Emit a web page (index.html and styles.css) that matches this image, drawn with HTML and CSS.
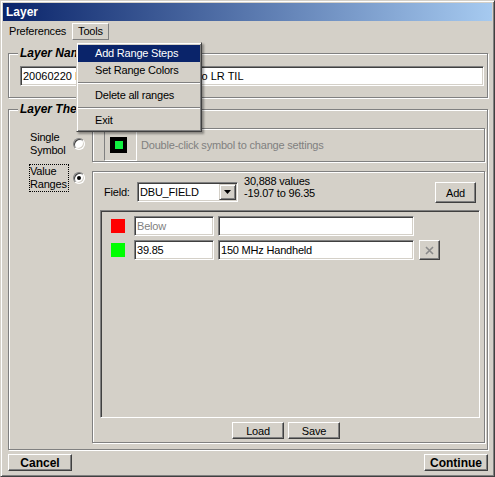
FILE: index.html
```html
<!DOCTYPE html>
<html>
<head>
<meta charset="utf-8">
<title>Layer</title>
<link rel="stylesheet" href="styles.css">
</head>
<body>
<div class="window">
  <div class="titlebar">Layer</div>
  <div class="menubar">
    <span class="menu-item">Preferences</span>
    <span class="menu-item open">Tools</span>
  </div>
  <div class="content">
    <div class="group name-group">
      <div class="group-title">Layer Name</div>
      <div class="field layer-name">20060220 DBU 150 MHz Handheld to LR TIL</div>
    </div>
    <div class="group theme-group">
      <div class="group-title">Layer Theme</div>
      <div class="theme-body">
        <div class="options">
          <div class="option opt-single">
            <span class="opt-label">Single<br>Symbol</span>
            <span class="radio"></span>
          </div>
          <div class="option opt-ranges">
            <span class="opt-label focus">Value<br>Ranges</span>
            <span class="radio checked"></span>
          </div>
        </div>
        <div class="panels">
          <div class="panel single-panel">
            <div class="symbol"><div class="symbol-black"><div class="symbol-fill"></div></div></div>
            <span class="hint">Double-click symbol to change settings</span>
          </div>
          <div class="panel ranges-panel">
            <div class="field-row">
              <span class="field-label">Field:</span>
              <div class="combo">
                <span class="combo-text">DBU_FIELD</span>
                <span class="combo-btn"><svg width="7" height="4" viewBox="0 0 7 4"><polygon points="0,0 7,0 3.5,4" fill="#000"/></svg></span>
              </div>
              <div class="stats">
                <div>30,888 values</div>
                <div>-19.07 to 96.35</div>
              </div>
              <button class="btn add-btn">Add</button>
            </div>
            <div class="range-list">
              <div class="range-row">
                <span class="swatch red"></span>
                <div class="field min disabled">Below</div>
                <div class="field lbl"></div>
              </div>
              <div class="range-row">
                <span class="swatch green"></span>
                <div class="field min">39.85</div>
                <div class="field lbl">150 MHz Handheld</div>
                <button class="btn x-btn"><svg width="9" height="9" viewBox="0 0 9 9"><path d="M1 1 L8 8 M8 1 L1 8" stroke="#8a8a8a" stroke-width="1.6" fill="none"/></svg></button>
              </div>
            </div>
            <div class="io-row">
              <button class="btn io-btn">Load</button>
              <button class="btn io-btn">Save</button>
            </div>
          </div>
        </div>
      </div>
    </div>
    <div class="bottom-bar">
      <button class="btn main-btn">Cancel</button>
      <button class="btn main-btn">Continue</button>
    </div>
  </div>
  <div class="dropdown">
    <div class="dd-item active">Add Range Steps</div>
    <div class="dd-item">Set Range Colors</div>
    <div class="dd-sep"></div>
    <div class="dd-item">Delete all ranges</div>
    <div class="dd-sep"></div>
    <div class="dd-item">Exit</div>
  </div>
</div>
</body>
</html>
```
FILE: styles.css
```css
* { box-sizing: border-box; }
html, body { margin: 0; padding: 0; }
body {
  font-family: "Liberation Sans", Arial, sans-serif;
  font-size: 11px;
  letter-spacing: -0.2px;
  color: #000;
  background: #d4d0c8;
}
.window {
  position: relative;
  width: 495px;
  height: 477px;
  display: flex;
  flex-direction: column;
  background: #d4d0c8;
  border: 1px solid;
  border-color: #d4d0c8 #404040 #404040 #d4d0c8;
  box-shadow: inset 1px 1px 0 #fff, inset -1px -1px 0 #808080;
  padding: 2px;
}
.titlebar {
  height: 18px;
  line-height: 18px;
  padding-left: 3px;
  background: linear-gradient(90deg, #0a246a, #a6caf0);
  color: #fff;
  font-weight: bold;
  font-size: 12px;
  letter-spacing: 0;
}
.menubar {
  height: 19px;
  display: flex;
  padding-top: 2px;
}
.menu-item {
  height: 17px;
  line-height: 15px;
  padding: 0 5px;
  border: 1px solid transparent;
}
.menu-item.open {
  border-color: #fff #808080 #808080 #fff;
}
.content {
  flex: 1;
  display: flex;
  flex-direction: column;
  padding: 0 4px 0 5px;
}
.group {
  border: 1px solid #808080;
  box-shadow: inset 1px 1px 0 #fff, 1px 1px 0 #fff;
}
.group-title {
  font-size: 12px;
  font-weight: bold;
  font-style: italic;
  letter-spacing: 0;
  line-height: 14px;
  height: 14px;
  margin-top: -8px;
  background: #d4d0c8;
  width: max-content;
  padding: 0 2px;
}
.name-group {
  margin-top: 13px;
  padding: 0 3px 11px 11px;
}
.name-group .group-title {
  margin-left: -2px;
  margin-bottom: 6px;
}
.field {
  background: #fff;
  height: 20px;
  border: 1px solid;
  border-color: #808080 #fff #fff #808080;
  box-shadow: inset 1px 1px 0 #404040, inset -1px -1px 0 #d4d0c8;
  padding: 0 2px;
  line-height: 18px;
  white-space: nowrap;
  overflow: hidden;
}
.layer-name { letter-spacing: 0; }
.field.disabled { color: #808080; }
.theme-group {
  margin-top: 11px;
  flex: 1;
  display: flex;
  flex-direction: column;
  padding: 0 2px 6px 20px;
}
.theme-group .group-title {
  margin-left: -11px;
  margin-bottom: 12px;
}
.theme-body {
  flex: 1;
  display: flex;
}
.options {
  width: 56px;
  margin-right: 7px;
}
.option {
  display: flex;
  align-items: center;
  gap: 4px;
}
.opt-single { margin-top: 2px; }
.opt-ranges { margin-top: 6px; }
.opt-label {
  width: 40px;
  line-height: 13px;
  border: 1px dotted transparent;
}
.opt-label.focus { border-color: #000; }
.radio {
  position: relative;
  width: 12px;
  height: 12px;
  border-radius: 50%;
  background: #fff;
  border: 1px solid;
  border-color: #808080 #fff #fff #808080;
  box-shadow: inset 1px 1px 0 #404040, inset -1px -1px 0 #d4d0c8;
  display: flex;
  align-items: center;
  justify-content: center;
}
.radio.checked::after {
  content: "";
  width: 4px;
  height: 4px;
  border-radius: 50%;
  background: #000;
}
.panels {
  flex: 1;
  display: flex;
  flex-direction: column;
  gap: 9px;
}
.panel {
  border: 1px solid #808080;
  box-shadow: inset 1px 1px 0 #fff, 1px 1px 0 #fff;
}
.single-panel {
  height: 34px;
  display: flex;
  align-items: center;
  padding-left: 11px;
}
.symbol {
  width: 33px;
  height: 31px;
  border: 1px solid;
  border-color: #808080 #fff #fff #808080;
  display: flex;
  align-items: center;
  padding-left: 5px;
}
.symbol-black {
  width: 17px;
  height: 16px;
  background: #000;
  display: flex;
  align-items: center;
  justify-content: center;
}
.symbol-fill {
  width: 8px;
  height: 8px;
  background: #10f040;
}
.hint {
  color: #808080;
  margin-left: 4px;
}
.ranges-panel {
  flex: 1;
  display: flex;
  flex-direction: column;
  padding: 10px 4px 3px 7px;
}
.field-row {
  display: flex;
  align-items: flex-start;
  height: 21px;
}
.field-label {
  margin-left: 4px;
  width: 33px;
  line-height: 20px;
}
.combo {
  width: 101px;
  height: 20px;
  display: flex;
  background: #fff;
  border: 1px solid;
  border-color: #808080 #fff #fff #808080;
  box-shadow: inset 1px 1px 0 #404040, inset -1px -1px 0 #d4d0c8;
}
.combo-text {
  flex: 1;
  padding-left: 2px;
  line-height: 18px;
}
.combo-btn {
  width: 17px;
  height: 16px;
  margin: 1px 1px 1px 0;
  background: #d4d0c8;
  border: 1px solid;
  border-color: #d4d0c8 #404040 #404040 #d4d0c8;
  box-shadow: inset 1px 1px 0 #fff, inset -1px -1px 0 #808080;
  display: flex;
  align-items: center;
  justify-content: center;
}
.stats {
  margin-left: 6px;
  margin-top: -7px;
  line-height: 12px;
}
.btn {
  font-family: inherit;
  font-size: 11px;
  letter-spacing: inherit;
  color: #000;
  background: #d4d0c8;
  border: 1px solid;
  border-color: #fff #404040 #404040 #fff;
  box-shadow: inset -1px -1px 0 #808080;
  padding: 0;
  margin: 0;
  display: flex;
  align-items: center;
  justify-content: center;
}
.add-btn {
  margin-left: auto;
  margin-right: 4px;
  width: 41px;
  height: 21px;
}
.range-list {
  flex: 1;
  margin-top: 7px;
  border: 1px solid;
  border-color: #808080 #fff #fff #808080;
  box-shadow: inset 1px 1px 0 #404040, inset -1px -1px 0 #d4d0c8;
  padding: 5px 0 0 10px;
  display: flex;
  flex-direction: column;
  gap: 4px;
}
.range-row {
  display: flex;
  align-items: center;
  height: 20px;
}
.swatch {
  width: 14px;
  height: 14px;
  margin-right: 9px;
}
.swatch.red { background: #ff0000; }
.swatch.green { background: #00ff00; }
.min { width: 80px; }
.lbl { width: 196px; margin-left: 4px; }
.x-btn {
  width: 21px;
  height: 20px;
  margin-left: 5px;
}
.io-row {
  display: flex;
  justify-content: center;
  gap: 4px;
  margin-top: 4px;
  padding-right: 8px;
}
.io-btn {
  width: 52px;
  height: 17px;
}
.bottom-bar {
  display: flex;
  justify-content: space-between;
  padding-top: 4px;
  height: 24px;
}
.main-btn {
  width: 64px;
  height: 17px;
  font-weight: bold;
  font-size: 12px;
  letter-spacing: 0;
}
.dropdown {
  position: absolute;
  left: 75px;
  top: 41px;
  width: 126px;
  background: #d4d0c8;
  border: 1px solid;
  border-color: #d4d0c8 #404040 #404040 #d4d0c8;
  box-shadow: inset 1px 1px 0 #fff, inset -1px -1px 0 #808080, 2px 2px 2px rgba(0, 0, 0, 0.35);
  padding: 2px 1px;
}
.dd-item {
  height: 17px;
  line-height: 17px;
  padding-left: 17px;
}
.dd-item.active {
  background: #0a246a;
  color: #fff;
}
.dd-sep {
  height: 2px;
  margin: 3px 0;
  border-top: 1px solid #808080;
  border-bottom: 1px solid #fff;
}
```
